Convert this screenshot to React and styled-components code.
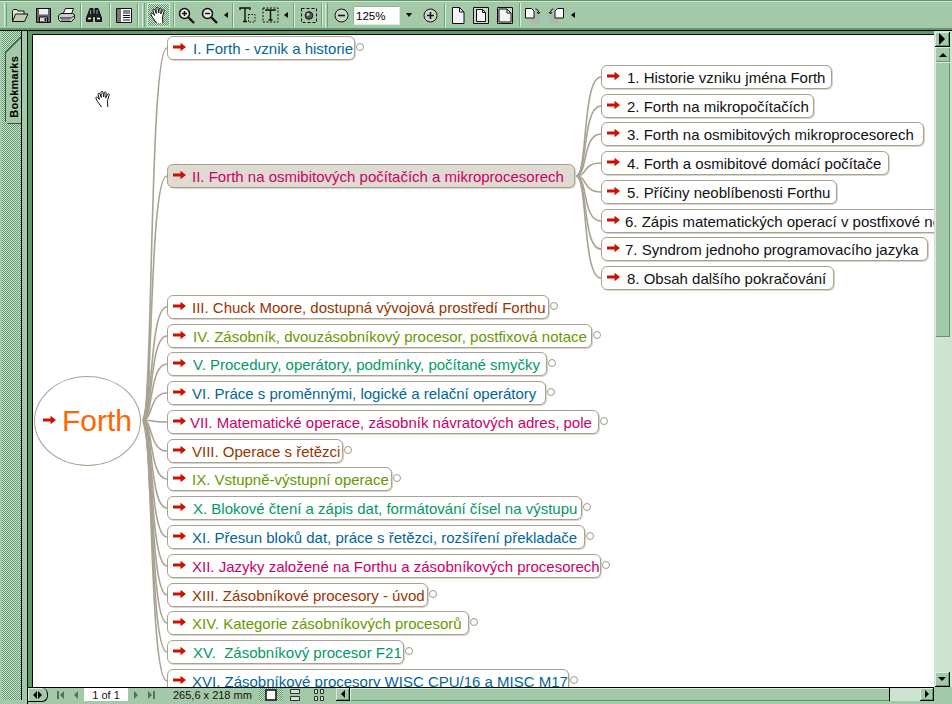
import React from 'react';
import styled, { createGlobalStyle } from 'styled-components';

const Global = createGlobalStyle`
  html, body { margin: 0; padding: 0; width: 952px; height: 704px; overflow: hidden; background: #a3c9a8; }
  * { box-sizing: border-box; }
`;

const hatch = `repeating-conic-gradient(#5d9a69 0 25%, #cfe3d2 0 50%) 0 0 / 2px 2px`;

const Page = styled.div`
  width: 952px; height: 704px; display: flex; flex-direction: column;
  background: #a3c9a8; font-family: "Liberation Sans", Arial, sans-serif; overflow: hidden;
`;
const Toolbar = styled.div`
  height: 30px; flex: none; display: flex; align-items: center; padding: 1px 0 0 4px;
  background: #a3c9a8; border-top: 1px solid #5d9a69; border-bottom: 2px solid #5d9a69;
  box-shadow: inset 0 1px 0 #cfe3d2; position: relative;
`;
const Grip = styled.div`
  width: 3px; height: 24px; flex: none; margin-right: ${p => p.$mr ?? 1}px;
  border-left: 1px solid #dcebdd; border-right: 1px solid #6fa47a;
`;
const Tool = styled.div`
  flex: none; width: ${p => p.$w ?? 23}px; height: 24px; display: flex; align-items: center; justify-content: center;
  ${p => p.$on && `background: ${hatch}; box-shadow: inset 0 0 0 1px #cfe3d2;`}
`;
const Sep = styled.div`
  flex: none; width: 2px; height: 24px; margin: 0 ${p => p.$r ?? 2}px 0 ${p => p.$l ?? 2}px;
  border-left: 1px solid #6fa47a; border-right: 1px solid #dcebdd;
`;
const Caret = styled.div`
  flex: none; width: 0; height: 0; margin: 0 ${p => p.$r ?? 4}px 0 ${p => p.$l ?? 3}px;
  border-top: 3px solid transparent; border-bottom: 3px solid transparent; border-right: 4px solid #000;
`;
const DownCaret = styled.div`
  flex: none; width: 0; height: 0; margin: 0 6px;
  border-left: 3px solid transparent; border-right: 3px solid transparent; border-top: 4px solid #000;
`;
const ZoomField = styled.div`
  flex: none; width: 47px; height: 19px; margin-left: 3px; background: #fff; font-size: 11.5px; line-height: 18px; padding-left: 2px; color: #000;
  border: 1px solid #8bb892; border-bottom-color: #dcebdd; border-right-color: #dcebdd;
`;
const Middle = styled.div`
  flex: 1; min-height: 0; display: flex; background: #a3c9a8; border-top: 1px solid #000;
`;
const Side = styled.div`
  width: 22px; flex: none; border-right: 1px solid #000; border-left: 2px solid #a3c9a8; padding-top: 5px; background: ${hatch};
  margin-bottom: 4px;
`;
const TabLabel = styled.div`
  width: 16px; height: 88px; margin-left: 3px; background: #2f5f3a; padding: 1px 0 1px 1px;
  clip-path: polygon(0 16px, 16px 0, 100% 0, 100% 100%, 3px 100%, 0 calc(100% - 3px));
`;
const TabFace = styled.div`
  width: 100%; height: 100%; background: #a3c9a8; display: flex; align-items: flex-end; justify-content: center; padding-bottom: 5px;
  clip-path: polygon(0 16px, 16px 0, 100% 0, 100% 100%, 0 100%);
  & > span { writing-mode: vertical-rl; transform: rotate(180deg); font: bold 11px "Liberation Sans", Arial, sans-serif; color: #000; letter-spacing: .2px; }
`;
const Rail = styled.div`
  width: 5px; flex: none; background: #a3c9a8; margin-bottom: 4px;
`;
const Viewer = styled.div`
  flex: 1; min-width: 0; display: flex; flex-direction: column; border-left: 1px solid #000;
`;
const ViewerRow = styled.div`
  flex: 1; min-height: 0; display: flex;
`;
const DocBack = styled.div`
  flex: 1; min-width: 0; display: flex; flex-direction: column; background: #5d9a69; padding: 3px 0 0 4px;
`;
const Sheet = styled.div`
  flex: 1; min-height: 0; position: relative; overflow: hidden; background: #fff;
  border-left: 1px solid #000; border-top: 1px solid #000;
`;
const VScroll = styled.div`
  width: 18px; flex: none; display: flex; flex-direction: column; background: #cfe3d2; padding: 1px 0 0 1px;
`;
const ScrollBtn = styled.div`
  width: ${p => p.$w ?? 15}px; height: ${p => p.$h ?? 15}px; flex: none; display: flex; align-items: center; justify-content: center;
  background: #a3c9a8; box-shadow: inset 1px 1px 0 #dcebdd, inset -1px -1px 0 #5d9a69;
  ${p => p.$black && 'border-right: 1px solid #000; border-bottom: 1px solid #000;'}
`;
const VThumb = styled.div`
  width: 15px; height: 275px; flex: none; background: #a3c9a8; box-shadow: inset 1px 1px 0 #dcebdd, inset -1px -1px 0 #5d9a69;
`;
const Fill = styled.div`flex: 1;`;
const TriUp = styled.div`width:0;height:0;border-left:4px solid transparent;border-right:4px solid transparent;border-bottom:4px solid #000;`;
const TriDown = styled.div`width:0;height:0;border-left:4px solid transparent;border-right:4px solid transparent;border-top:4px solid #000;`;
const TriRight = styled.div`width:0;height:0;border-top:${p => p.$s ?? 4}px solid transparent;border-bottom:${p => p.$s ?? 4}px solid transparent;border-left:${p => p.$s ?? 4}px solid #000;`;
const TriLeft = styled.div`width:0;height:0;border-top:4px solid transparent;border-bottom:4px solid transparent;border-right:4px solid #000;`;

const Status = styled.div`
  height: 17px; flex: none; display: flex; align-items: flex-start; background: #a3c9a8; border-top: 1px solid #000;
  margin-right: 18px; position: relative;
`;
const SplitBtn = styled.div`
  width: 20px; height: 14px; flex: none; display: flex; align-items: center; justify-content: center; gap: 1px;
  background: #a3c9a8; border-right: 1px solid #000; border-bottom: 1px solid #000; border-radius: 0 6px 6px 0;
  box-shadow: inset 1px 1px 0 #dcebdd;
`;
const NavBtn = styled.div`
  flex: none; width: ${p => p.$w ?? 14}px; height: 13px; margin-left: ${p => p.$ml ?? 0}px; display: flex; align-items: center; justify-content: center; opacity: .45;
  gap: 1px;
`;
const PageBox = styled.div`
  flex: none; width: 44px; height: 13px; margin-left: 1px; background: #fff; text-align: center; font-size: 11px; line-height: 14px; color: #111;
`;
const Bar = styled.div`width: 2px; height: 8px; background: #000;`;
const Dim = styled.div`
  flex: none; margin-left: 13px; width: 86px; font-size: 11px; line-height: 14px; color: #111; white-space: nowrap;
`;
const ViewBtn = styled.div`
  flex: none; width: 24px; height: 13px; display: flex; align-items: center; justify-content: center;
  ${p => p.$on && `background: ${hatch};`}
`;
const HTrack = styled.div`
  margin-left: 5px; flex: 1; height: 13px; display: flex; background: #cfe3d2;
`;
const HThumb = styled.div`
  flex: none; width: 540px; height: 13px; background: #a3c9a8; border-right: 1px solid #000; box-shadow: inset 1px 1px 0 #dcebdd, inset 0 -1px 0 #5d9a69;
`;

/* mind map */
const MapLines = styled.svg`
  position: absolute; left: -33px; top: -35px; width: 952px; height: 704px; pointer-events: none;
`;
const Node = styled.div`
  position: absolute; left: ${p => p.$x - 33}px; top: ${p => p.$cy - 47}px; width: ${p => p.$w}px; height: 24px;
  background: ${p => p.$sel ? '#dfdbd3' : '#fff'}; border: 1px solid #a8a290; border-radius: 6px;
  box-shadow: 1px 1px 0 #d8d5cc; display: flex; align-items: center; white-space: nowrap;
  overflow: visible; padding-left: 5px;
`;
const NodeText = styled.span`
  font-size: 15px; line-height: 22px; color: ${p => p.$c}; margin-left: ${p => p.$g}px; position: relative; top: 1px;
`;
const Bubble = styled.div`
  position: absolute; left: 1px; top: 341px; width: 107px; height: 90px; border: 1.5px solid #a8a290; border-radius: 50%; background: #fff;
  display: flex; align-items: center; padding-left: 8px;
`;
const BubbleText = styled.span`
  font-size: 30px; color: #ff6600; margin-left: 6px; line-height: 34px; position: relative; top: 0;
`;
const Knob = styled.div`
  position: absolute; left: ${p => p.$x - 33}px; top: ${p => p.$cy - 39}px; width: 8px; height: 8px; border-radius: 50%;
  background: #fff; border: 1.5px solid #a09a8a;
`;
const HandMark = styled.div`
  position: absolute; left: 62px; top: 55px; width: 18px; height: 18px; display: flex;
`;

const Arrow = () => (
  <svg width="13" height="10" viewBox="0 0 13 10" style={{ flex: 'none', marginTop: -2 }}>
    <path d="M0 3.5H7.5V.8L13 5L7.5 9.2V6.5H0Z" fill="#cc1100" />
  </svg>
);

const Folder = () => (
  <svg width="18" height="15" viewBox="0 0 18 15"><path d="M1.5 13.5V3L2.5 1.5H6L7 3H13V6" fill="#e8e8e0" stroke="#111" /><path d="M1.5 13.5L4.5 6H17L13.5 13.5Z" fill="#c8c8b8" stroke="#111" /></svg>
);
const Floppy = () => (
  <svg width="15" height="15" viewBox="0 0 15 15"><path d="M.5.5H14.5V14.5H.5Z" fill="#666" stroke="#111" /><path d="M3 1H12V6.5H3Z" fill="#eee" /><path d="M3.5 9H11.5V14H3.5Z" fill="#ddd" stroke="#111" /><path d="M8.5 10H10.5V13H8.5Z" fill="#222" /></svg>
);
const Printer = () => (
  <svg width="17" height="15" viewBox="0 0 17 15"><path d="M5 6L7.5 .5H15.5L13.5 6Z" fill="#fff" stroke="#111" /><path d="M.5 7.5L3 5.5H14.5L16.5 6.5V10.5L13.5 13.5H2.5L.5 11.5Z" fill="#ccc" stroke="#111" /><path d="M2 10H13.5L15.5 8" fill="none" stroke="#111" /><path d="M3 12H12" stroke="#666" /></svg>
);
const Binoculars = () => (
  <svg width="16" height="14" viewBox="0 0 16 14"><path d="M4 .5H7V6H9V.5H12L15.5 10V13.5H9.5V8.5H6.5V13.5H.5V10Z" fill="#222" stroke="#111" /><path d="M2 10.5H5M11 10.5H14" stroke="#fff" strokeWidth="1.5" /><path d="M4.5 2V6M11 2V6" stroke="#999" /></svg>
);
const PanelIcon = () => (
  <svg width="16" height="15" viewBox="0 0 16 15"><path d="M.5.5H15.5V14.5H.5Z" fill="#fff" stroke="#111" /><path d="M1 1H5V14H1Z" fill="#777" /><path d="M7 3H14M7 5H14M7 7.5H14M7 9.5H14M7 12H14" stroke="#111" /></svg>
);
const HandIcon = ({ s = 18 }) => (
  <svg width={s} height={s} viewBox="0 0 18 18"><path d="M6.5 17L2.5 11.5L.8 8.2C.6 7 2 6.7 2.8 7.5L4.5 9.5L3 4.5C2.8 3 4.6 2.8 5 4L6.3 7.5L6 2.5C6 1 7.8 1 8 2.4L8.7 7L9.3 2.8C9.6 1.5 11.3 1.8 11.2 3.2L10.7 8L12.5 4.2C13.2 3.2 14.6 4 14.2 5.2L12.5 10.5L12.8 17" fill="#fff" stroke="#111" strokeWidth="1" strokeLinejoin="round" /></svg>
);
const Magnify = ({ plus }) => (
  <svg width="17" height="17" viewBox="0 0 17 17"><circle cx="6.5" cy="6.5" r="5" fill="#e8e8e0" stroke="#111" strokeWidth="1.5" /><path d="M10.5 10.5L16 16" stroke="#111" strokeWidth="2.4" /><path d={plus ? 'M4 6.5H9M6.5 4V9' : 'M4 6.5H9'} stroke="#111" strokeWidth="1.4" /></svg>
);
const TextTool = ({ framed }) => (
  <svg width="17" height="16" viewBox="0 0 17 16">
    {framed && <path d="M1 1H16V15H1Z" fill="none" stroke="#111" strokeDasharray="2 1.5" />}
    {!framed && <path d="M9.5 7.5H16V15H9.5Z" fill="none" stroke="#111" strokeDasharray="1.5 1.5" />}
    <path d={framed ? 'M4 4V3H13V4M8.5 3V13M6.5 13H10.5' : 'M1 3V1H11V3M6 1V14.5M4 14.5H8'} fill="none" stroke="#111" strokeWidth="1.4" />
  </svg>
);
const Snapshot = () => (
  <svg width="16" height="15" viewBox="0 0 16 15"><path d="M.5.5H15.5V14.5H.5Z" fill="none" stroke="#111" strokeDasharray="3 2" /><circle cx="8" cy="7.5" r="3.8" fill="#555" stroke="#111" /><circle cx="7" cy="6.5" r="1.4" fill="#ccc" /></svg>
);
const RoundBtn = ({ plus }) => (
  <svg width="15" height="15" viewBox="0 0 15 15"><circle cx="7.5" cy="7.5" r="6.5" fill="#c8d8c8" stroke="#111" /><path d={plus ? 'M4 7.5H11M7.5 4V11' : 'M4 7.5H11'} stroke="#111" strokeWidth="1.6" /></svg>
);
const PageIcon = ({ framed, wide }) => (
  <svg width="16" height="17" viewBox="0 0 16 17">
    {framed && <path d="M.5.5H15.5V16.5H.5Z" fill="#c9d8ca" stroke="#111" />}
    <path d={wide ? 'M2 2H10L14 6V15H2Z' : framed ? 'M3.5 2.5H9.5L12.5 5.5V14.5H3.5Z' : 'M2.5 .5H9.5L14 5V16.5H2.5Z'} fill="#f4f4f4" stroke="#111" />
    <path d={wide ? 'M10 2V6H14' : framed ? 'M9.5 2.5V5.5H12.5' : 'M9.5 .5V5H14'} fill="none" stroke="#111" />
  </svg>
);
const Rotate = ({ flip }) => (
  <svg width="16" height="17" viewBox="0 0 16 17" style={flip ? { transform: 'scaleX(-1)' } : undefined}>
    <path d="M6 8H15V16.5H6Z" fill="#a9b9ab" /><path d="M.5 1.5H6.5L9 4V11H.5Z" fill="#fff" stroke="#111" />
    <path d="M10.5 2C12.5 2 13.5 3.5 13.5 5.5M12 5L13.5 7L15 5" fill="none" stroke="#111" />
  </svg>
);

const main = [
  [48, 'I. Forth - vznik a historie', '#006699', 188, 7, 1],
  [176, 'II. Forth na osmibitových počítačích a mikroprocesorech', '#cc0066', 408, 6, 0, 1],
  [307, 'III. Chuck Moore, dostupná vývojová prostředí Forthu', '#993300', 382, 6, 1],
  [336, 'IV. Zásobník, dvouzásobníkový procesor, postfixová notace', '#669900', 425, 7, 1],
  [364, 'V. Procedury, operátory, podmínky, počítané smyčky', '#009966', 380, 7, 1],
  [393, 'VI. Práce s proměnnými, logické a relační operátory', '#006699', 379, 6, 1],
  [422, 'VII. Matematické operace, zásobník návratových adres, pole', '#cc0066', 432, 4, 1],
  [451, 'VIII. Operace s řetězci', '#993300', 176, 6, 1],
  [479, 'IX. Vstupně-výstupní operace', '#669900', 225, 6, 1],
  [508, 'X. Blokové čtení a zápis dat, formátování čísel na výstupu', '#009966', 415, 7, 1],
  [537, 'XI. Přesun bloků dat, práce s řetězci, rozšíření překladače', '#006699', 418, 6, 1],
  [566, 'XII. Jazyky založené na Forthu a zásobníkových procesorech', '#cc0066', 434, 6, 1],
  [595, 'XIII. Zásobníkové procesory - úvod', '#993300', 261, 6, 1],
  [623, 'XIV. Kategorie zásobníkových procesorů', '#669900', 302, 6, 1],
  [652, 'XV.\u00a0 Zásobníkový procesor F21', '#009966', 237, 7, 1],
  [681, 'XVI. Zásobníkové procesory WISC CPU/16 a MISC M17', '#006699', 402, 6, 1],
];
const sub = [
  [77, '1. Historie vzniku jména Forth', 231, 7],
  [106, '2. Forth na mikropočítačích', 213, 7],
  [134, '3. Forth na osmibitových mikroprocesorech', 323, 7],
  [163, '4. Forth a osmibitové domácí počítače', 288, 7],
  [192, '5. Příčiny neoblíbenosti Forthu', 236, 7],
  [221, '6. Zápis matematických operací v postfixové notaci', 380, 5],
  [249, '7. Syndrom jednoho programovacího jazyka', 327, 5],
  [278, '8. Obsah dalšího pokračování', 233, 7],
];

export default function App() {
  return (
    <Page>
      <Global />
      <Toolbar>
        <Grip />
        <Tool $w={23}><Folder /></Tool>
        <Tool $w={24}><Floppy /></Tool>
        <Tool $w={23}><Printer /></Tool>
        <Sep $l={2} $r={2} />
        <Tool $w={20}><Binoculars /></Tool>
        <Sep $l={5} $r={2} />
        <Tool $w={22}><PanelIcon /></Tool>
        <Sep $l={2} $r={3} />
        <Grip $mr={2} />
        <Tool $w={23} $on><HandIcon /></Tool>
        <Sep $l={3} $r={0} />
        <Tool $w={22}><Magnify plus /></Tool>
        <Tool $w={24}><Magnify /></Tool>
        <Caret $l={3} $r={4} />
        <Sep $l={0} $r={2} />
        <Tool $w={22}><TextTool /></Tool>
        <Tool $w={24}><TextTool framed /></Tool>
        <Caret $l={2} $r={5} />
        <Sep $l={0} $r={2} />
        <Tool $w={24}><Snapshot /></Tool>
        <Sep $l={0} $r={2} />
        <Grip $mr={5} />
        <Tool $w={17}><RoundBtn /></Tool>
        <ZoomField>125%</ZoomField>
        <DownCaret />
        <Tool $w={24}><RoundBtn plus /></Tool>
        <Sep $l={2} $r={1} />
        <Tool $w={22}><PageIcon /></Tool>
        <Tool $w={24}><PageIcon framed /></Tool>
        <Tool $w={24}><PageIcon framed wide /></Tool>
        <Sep $l={2} $r={0} />
        <Tool $w={23}><Rotate /></Tool>
        <Tool $w={24}><Rotate flip /></Tool>
        <Caret $l={3} $r={0} />
      </Toolbar>
      <Middle>
        <Side>
          <TabLabel>
            <TabFace><span>Bookmarks</span></TabFace>
          </TabLabel>
        </Side>
        <Rail />
        <Viewer>
          <ViewerRow>
            <DocBack>
              <Sheet>
                <MapLines viewBox="0 0 952 704">
                  <g fill="none" stroke="#a8a290" strokeWidth="1.6">
                    {main.map(([cy]) => (
                      <path key={cy} d={`M143 420C153 420 149 ${cy} 167 ${cy}`} />
                    ))}
                    {sub.map(([cy]) => (
                      <path key={cy} d={`M576 176C588 176 582 ${cy} 601 ${cy}`} />
                    ))}
                    <path d="M143 420C146 414 148 400 149 370M143 420C146 428 149 450 150 490" strokeWidth="2.4" />
                  </g>
                </MapLines>
                {main.map(([cy, text, c, w, g, knob, sel]) => (
                  <React.Fragment key={text}>
                    <Node $x={167} $cy={cy} $w={w} $sel={sel}>
                      <Arrow />
                      <NodeText $c={c} $g={g}>{text}</NodeText>
                    </Node>
                    {knob ? <Knob $x={167 + w + 1} $cy={cy - 1} /> : null}
                  </React.Fragment>
                ))}
                {sub.map(([cy, text, w, g]) => (
                  <Node key={text} $x={601} $cy={cy} $w={w}>
                    <Arrow />
                    <NodeText $c="#111" $g={g}>{text}</NodeText>
                  </Node>
                ))}
                <Bubble>
                  <Arrow />
                  <BubbleText>Forth</BubbleText>
                </Bubble>
                <HandMark><HandIcon /></HandMark>
              </Sheet>
            </DocBack>
            <VScroll>
              <ScrollBtn $black><TriRight $s={6} /></ScrollBtn>
              <ScrollBtn><TriUp /></ScrollBtn>
              <VThumb />
              <Fill />
              <ScrollBtn $black><TriDown /></ScrollBtn>
            </VScroll>
          </ViewerRow>
          <Status>
            <SplitBtn><TriLeft /><TriRight /></SplitBtn>
            <NavBtn $w={15} $ml={5}><Bar /><TriLeft /></NavBtn>
            <NavBtn $w={15}><TriLeft /></NavBtn>
            <PageBox>1 of 1</PageBox>
            <NavBtn $w={15}><TriRight /></NavBtn>
            <NavBtn $w={17}><TriRight /><Bar /></NavBtn>
            <Dim>265,6 x 218 mm</Dim>
            <ViewBtn $on>
              <svg width="12" height="12" viewBox="0 0 12 12"><path d="M1 1H11V11H1Z" fill="#fff" stroke="#111" strokeWidth="1.5" /></svg>
            </ViewBtn>
            <ViewBtn>
              <svg width="12" height="12" viewBox="0 0 12 12"><path d="M1.5 .5H10.5V4.5H1.5ZM1.5 7.5H10.5V11.5H1.5Z" fill="#cfe3d2" stroke="#333" /></svg>
            </ViewBtn>
            <ViewBtn>
              <svg width="12" height="12" viewBox="0 0 12 12"><path d="M1.5 .5H4.5V4.5H1.5ZM7.5 .5H10.5V4.5H7.5ZM1.5 7.5H4.5V11.5H1.5ZM7.5 7.5H10.5V11.5H7.5Z" fill="#cfe3d2" stroke="#333" /></svg>
            </ViewBtn>
            <HTrack>
              <ScrollBtn $w={14} $h={13} $black><TriLeft /></ScrollBtn>
              <HThumb />
              <Fill />
              <ScrollBtn $w={14} $h={13} $black><TriRight /></ScrollBtn>
            </HTrack>
          </Status>
        </Viewer>
      </Middle>
    </Page>
  );
}
